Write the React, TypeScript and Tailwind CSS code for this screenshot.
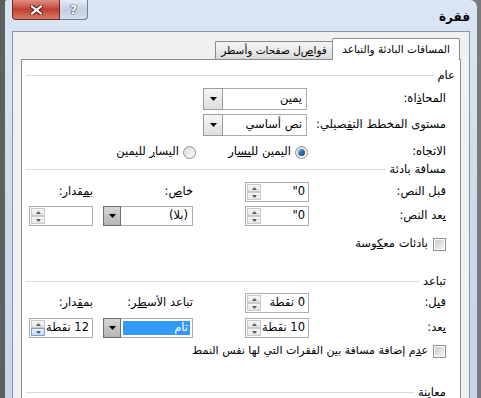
import React from "react";

const DownArrow = () => (
  <svg width="7" height="4" viewBox="0 0 7 4">
    <polygon points="0,0 7,0 3.5,4" fill="#000" />
  </svg>
);

const Combo = ({ value, w, h = 22, dark, selected }: { value: string; w: string; h?: number; dark?: boolean; selected?: boolean }) => (
  <div className={`flex border border-[#abadb3] bg-white ${w}`} style={{ height: h }}>
    <div className="flex flex-1 items-center p-[2px]">
      <div className={`flex h-full flex-1 items-center whitespace-nowrap pr-[2px] ${selected ? "bg-[#3399ff] text-white" : ""}`}>{value}</div>
    </div>
    {dark ? (
      <div className="-my-px -ml-px flex w-[18px] items-center justify-center border border-[#6e6e6e] bg-gradient-to-b from-[#d6d6d6] to-[#b4b4b4]">
        <DownArrow />
      </div>
    ) : (
      <div className="-my-px -ml-px flex w-[20px] items-center justify-center border border-[#9d9d9d] bg-gradient-to-b from-[#f6f6f6] to-[#dedede]">
        <DownArrow />
      </div>
    )}
  </div>
);

const SpinBtn = ({ up, hot }: { up?: boolean; hot?: boolean }) => (
  <div className={`flex flex-1 items-center justify-center border ${hot ? "border-[#7da2ce] bg-gradient-to-b from-[#e8f2fc] to-[#c6ddf5]" : "border-[#c9c9c9] bg-gradient-to-b from-[#f7f7f7] to-[#e6e6e6]"}`}>
    <svg width="5" height="3" viewBox="0 0 5 3">
      <polygon points={up ? "0,3 5,3 2.5,0" : "0,0 5,0 2.5,3"} fill="#5b5b5b" />
    </svg>
  </div>
);

const Spin = ({ value, hot, ltr }: { value: string; hot?: boolean; ltr?: boolean }) => (
  <div className="flex h-[20px] w-[64px] border border-[#abadb3] bg-white">
    <div className="flex flex-1 items-center whitespace-nowrap pr-[3px]">{ltr ? <span dir="ltr">{value}</span> : value}</div>
    <div className="flex w-[16px] flex-col p-px">
      <SpinBtn up />
      <SpinBtn hot={hot} />
    </div>
  </div>
);

const Radio = ({ checked }: { checked?: boolean }) => (
  <div className="flex h-[13px] w-[13px] items-center justify-center rounded-full border border-[#8e8f8f] bg-gradient-to-br from-[#d9d9d9] to-[#fbfbfb]">
    {checked && <div className="h-[7px] w-[7px] rounded-full bg-gradient-to-br from-[#8fc2f0] via-[#2f6fb0] to-[#1a4a7c]" />}
  </div>
);

const Check = () => (
  <div className="flex h-[13px] w-[13px] shrink-0 items-center justify-center border border-[#8e8f8f] bg-white">
    <div className="h-[9px] w-[9px] bg-gradient-to-br from-[#cbcbcb] to-[#f6f6f6]" />
  </div>
);

const Header = ({ text, pr = "pr-[14px]" }: { text: string; pr?: string }) => (
  <div className={`flex h-[15px] items-center gap-[4px] pl-[4px] ${pr}`}>
    <span className="whitespace-nowrap">{text}</span>
    <div className="h-px flex-1 bg-[#d5dcdf]" />
  </div>
);

export default function App() {
  return (
    <div className="flex h-[398px] w-[481px] overflow-hidden bg-gradient-to-r from-[#5f5f5f] to-[#7a7a7a] pl-[5px] pr-[4px] font-['DejaVu_Sans',sans-serif] text-[11.5px] text-black">
      <div className="flex flex-1 flex-col rounded-tl-[2px] rounded-tr-[7px] bg-gradient-to-b from-[#dae6f4] via-[#cddbee] to-[#c4d5ea] px-[7px]">
        {/* title bar */}
        <div className="flex h-[31px] shrink-0 items-start">
          <div className="flex h-[20px]">
            <div className="flex w-[48px] items-center justify-center rounded-bl-[4px] border border-t-0 border-[#6b2b24] bg-gradient-to-b from-[#dd8f80] via-[#c13f33] to-[#d97a66]">
              <svg width="13" height="10" viewBox="0 0 13 10">
                <path d="M2 1.5 L11 8.5 M11 1.5 L2 8.5" stroke="#4a1a14" strokeWidth="4" strokeLinecap="square" />
                <path d="M2 1.5 L11 8.5 M11 1.5 L2 8.5" stroke="#fff" strokeWidth="2.2" strokeLinecap="square" />
              </svg>
            </div>
            <div className="flex w-[28px] items-center justify-center rounded-br-[4px] border border-l-0 border-t-0 border-[#6f7f95] bg-gradient-to-b from-[#e4ecf6] via-[#c2d0e2] to-[#d3deeb]">
              <span className="text-[13px] font-bold leading-none text-white [text-shadow:0_0_1px_#233,0_0_1px_#233,0_0_1px_#233]">?</span>
            </div>
          </div>
          <div className="ml-auto mt-[8px] text-[12px] font-bold" dir="rtl">فقرة</div>
        </div>

        {/* dialog body */}
        <div className="flex flex-1 flex-col border border-[#8796ad] bg-[#f0f0f0] px-[8px] pt-[6px]">
          <div className="flex h-[21px] items-end pr-px text-[10.5px]" dir="rtl">
            <div className="relative z-10 -mb-px flex h-[22px] w-[128px] items-center justify-center whitespace-nowrap rounded-t-[2px] border border-b-0 border-[#898c95] bg-white">
              المسافات البادئة والتباعد
            </div>
            <div className="flex h-[18px] w-[117px] items-center justify-center whitespace-nowrap rounded-tl-[2px] border border-b-0 border-r-0 border-[#898c95] bg-gradient-to-b from-[#f2f2f2] via-[#ebebeb] to-[#d6d6d6]">
              فوا<u>ص</u>ل صفحات وأسطر
            </div>
          </div>

          <div className="flex flex-1 flex-col whitespace-nowrap border border-[#898c95] bg-white pt-[8px]" dir="rtl">
            <Header text="عام" pr="pr-[5px]" />

            <div className="mt-[5px] flex items-center pr-[14px]">
              <div className="w-[139px]">المحا<u>ذ</u>اة:</div>
              <Combo value="يمين" w="w-[104px]" />
            </div>
            <div className="mt-[4px] flex items-center pr-[14px]">
              <div className="w-[139px]">مستوى المخطط الت<u>ف</u>صيلي:</div>
              <Combo value="نص أساسي" w="w-[104px]" />
            </div>
            <div className="mt-[8px] flex h-[16px] items-center pr-[14px]">
              <div className="w-[138px]">الاتجاه:</div>
              <div className="flex w-[112px] items-center gap-[4px]">
                <Radio checked />
                <span>اليمين لل<u>يس</u>ار</span>
              </div>
              <div className="flex items-center gap-[4px]">
                <Radio />
                <span>اليسا<u>ر</u> لليمين</span>
              </div>
            </div>

            <div className="mt-[2px]">
              <Header text="مسافة بادئة" />
            </div>
            <div className="mt-[5px] grid grid-cols-[137px_64px_52px_90px_10px_64px] grid-rows-[20px_20px] items-center gap-y-[4px] pr-[14px]">
              <div>قبل النص:</div>
              <Spin value={'"0'} ltr />
              <div />
              <div>خا<u>ص</u>:</div>
              <div />
              <div>ب<u>م</u>قدار:</div>
              <div><u>ب</u>عد النص:</div>
              <Spin value={'"0'} ltr />
              <div />
              <Combo value="(بلا)" w="w-[90px]" h={20} dark />
              <div />
              <Spin value="" />
            </div>
            <div className="mt-[10px] flex h-[16px] items-center gap-[5px] pr-[14px]">
              <Check />
              <span>بادئات مع<u>ك</u>وسة</span>
            </div>

            <div className="mt-[22px]">
              <Header text="تباعد" />
            </div>
            <div className="mt-[4px] grid grid-cols-[137px_64px_52px_90px_10px_64px] grid-rows-[20px_20px] items-center gap-y-[5px] pr-[14px]">
              <div>ق<u>ب</u>ل:</div>
              <Spin value="0 نقطة" />
              <div />
              <div>تباعد الأس<u>ط</u>ر:</div>
              <div />
              <div>بم<u>ق</u>دار:</div>
              <div><u>ب</u>عد:</div>
              <Spin value="10 نقطة" />
              <div />
              <Combo value="تام" w="w-[90px]" h={20} dark selected />
              <div />
              <Spin value="12 نقطة" hot />
            </div>
            <div className="mt-[5px] flex h-[16px] items-center gap-[5px] pr-[14px]">
              <Check />
              <span className="text-[11px]">ع<u>د</u>م إضافة مسافة بين الفقرات التي لها نفس النمط</span>
            </div>

            <div className="mt-[26px]">
              <Header text="معاينة" />
            </div>
          </div>
        </div>
      </div>
    </div>
  );
}
